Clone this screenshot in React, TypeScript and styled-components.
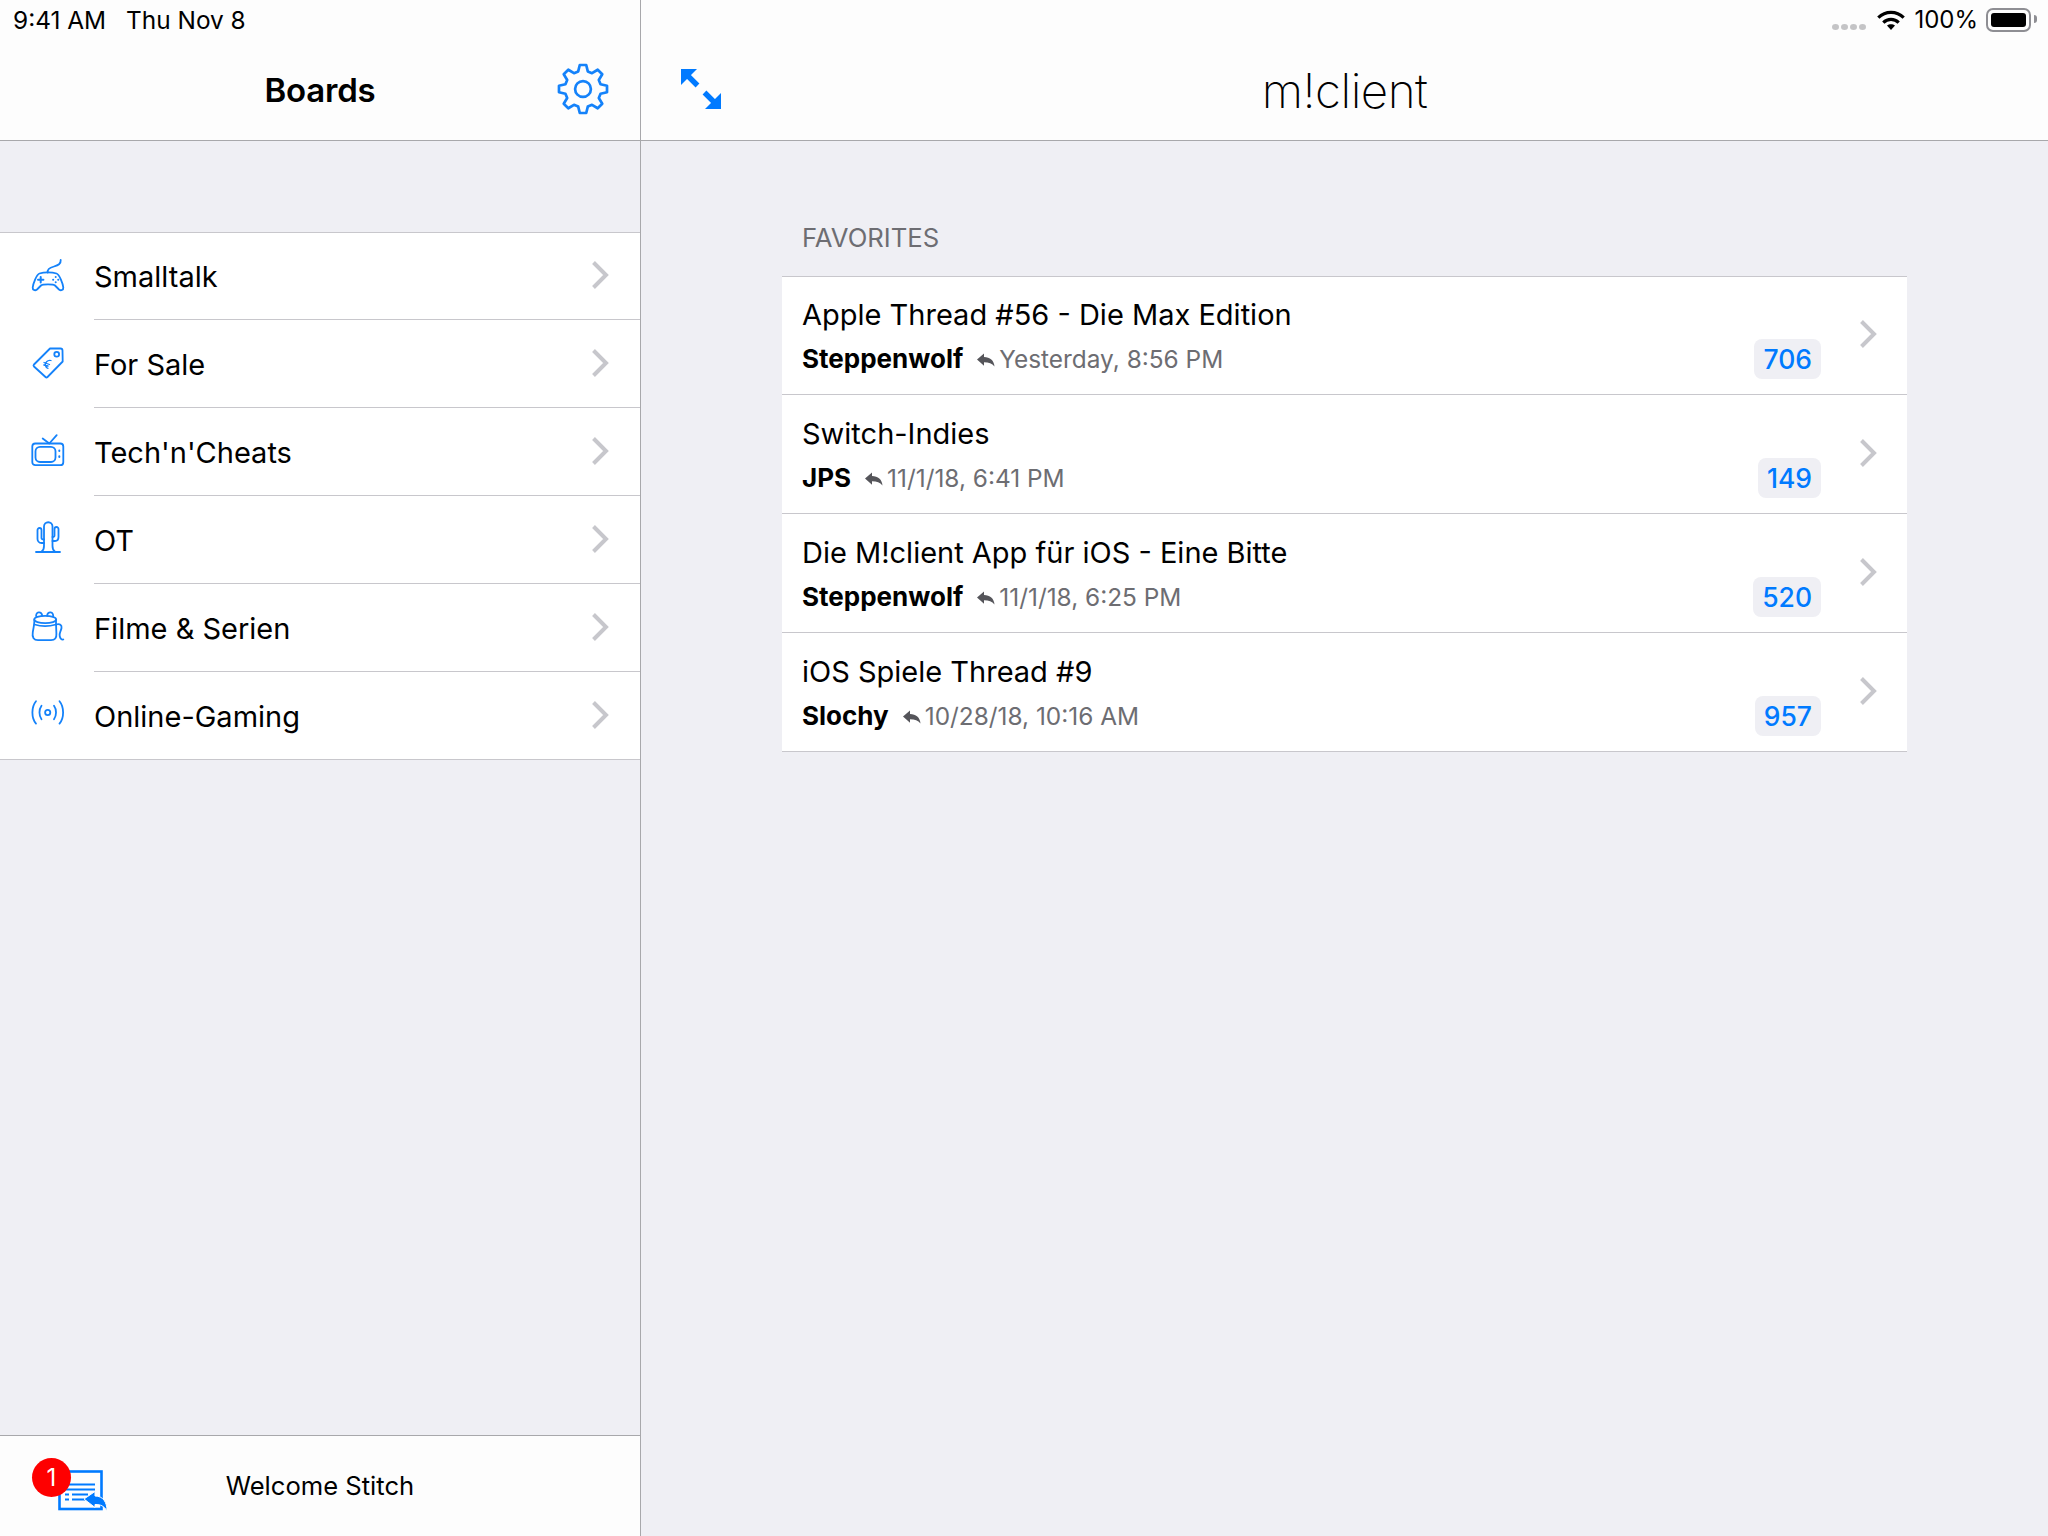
import React from 'react';
import styled, { createGlobalStyle } from 'styled-components';

const BLUE = '#007aff';

const GlobalStyle = createGlobalStyle`
  html, body {
    margin: 0;
    padding: 0;
    background: #efeff4;
  }
  * {
    box-sizing: border-box;
  }
  body {
    font-family: Inter, "Noto Sans", "Liberation Sans", sans-serif;
    color: #000;
  }
`;

const Page = styled.div`
  display: grid;
  grid-template-columns: 641px 1fr;
  width: 2048px;
  height: 1536px;
  overflow: hidden;
`;

const Sidebar = styled.div`
  display: flex;
  flex-direction: column;
  border-right: 1px solid #a8a8ab;
`;

const Main = styled.div`
  display: flex;
  flex-direction: column;
`;

const TopBar = styled.header`
  height: 141px;
  background: #fdfdfd;
  border-bottom: 1px solid #a8a8ab;
  display: flex;
  flex-direction: column;
`;

const StatusBar = styled.div<{ $right?: boolean }>`
  height: 40px;
  display: flex;
  align-items: center;
  justify-content: ${p => (p.$right ? 'flex-end' : 'flex-start')};
  padding: ${p => (p.$right ? '0 17px 0 0' : '0 0 0 13px')};
  font-size: 24.4px;
  line-height: 40px;
  gap: 20px;
`;

const StatusRight = styled.div`
  display: flex;
  align-items: center;
`;

const SignalDots = styled.div`
  display: flex;
  gap: 2px;
  margin: 13px 11px 0 0;
`;

const SignalDot = styled.span`
  width: 7px;
  height: 6px;
  border-radius: 50%;
  background: #c4c4c6;
`;

const BatteryPct = styled.span`
  margin: 0 8px 0 9px;
  font-size: 24px;
`;

const Battery = styled.div`
  width: 45px;
  height: 24px;
  padding: 3px;
  border: 2px solid #8e8e93;
  border-radius: 7px;
  position: relative;

  &::before {
    content: '';
    display: block;
    height: 100%;
    border-radius: 3px;
    background: #000;
  }
  &::after {
    content: '';
    position: absolute;
    right: -8px;
    top: 5px;
    width: 3px;
    height: 8px;
    border-radius: 0 3px 3px 0;
    background: #8e8e93;
  }
`;

const NavRow = styled.div`
  flex: 1;
  position: relative;
  display: flex;
  align-items: center;
  justify-content: center;
`;

const NavTitle = styled.h1`
  margin: 0;
  font-size: 33px;
  font-weight: 600;
  letter-spacing: -0.2px;
`;

const Brand = styled.div`
  margin-top: 2px;
  font-size: 47.5px;
  font-weight: 200;
  letter-spacing: -0.5px;
  line-height: 60px;
`;

const NavIcon = styled.svg<{ $side: 'left' | 'right'; $offset: number; $top: number }>`
  position: absolute;
  ${p => p.$side}: ${p => p.$offset}px;
  top: ${p => p.$top}px;
`;

const BoardSection = styled.div`
  margin-top: 91px;
  background: #fff;
  border-top: 1px solid #c8c7cc;
  border-bottom: 1px solid #c8c7cc;
`;

const BoardRow = styled.div`
  height: 88px;
  display: flex;
  align-items: center;
  padding-left: 30px;

  &:first-child,
  &:last-child {
    height: 87px;
  }
`;

const BoardIcon = styled.svg`
  flex: none;
  width: 36px;
  height: 36px;
  margin: -3px 28px 0 0;
  fill: none;
  stroke: #1482fa;
  stroke-width: 1.8;
  stroke-linecap: round;
  stroke-linejoin: round;
`;

const BoardBody = styled.div<{ $last?: boolean }>`
  flex: 1;
  align-self: stretch;
  display: flex;
  align-items: center;
  justify-content: space-between;
  padding: 1px 31px 0 0;
  font-size: 29px;
  border-bottom: ${p => (p.$last ? 'none' : '1px solid #c8c7cc')};
`;

const Chevron = styled.svg`
  flex: none;
  width: 18px;
  height: 28px;
  margin-top: -3px;
  fill: none;
  stroke: #c7c7cc;
  stroke-width: 4;
`;

const Spacer = styled.div`
  flex: 1;
`;

const BottomBar = styled.footer`
  height: 101px;
  background: #fdfdfd;
  border-top: 1px solid #a8a8ab;
  position: relative;
  display: flex;
  align-items: center;
  justify-content: center;
  font-size: 25.6px;
  padding-bottom: 1px;
`;

const InboxIcon = styled.svg`
  position: absolute;
  left: 58px;
  top: 33px;
`;

const RedBadge = styled.span`
  position: absolute;
  left: 32px;
  top: 22px;
  width: 39px;
  height: 39px;
  border-radius: 50%;
  background: #fe0000;
  color: #fff;
  font-size: 24px;
  display: flex;
  align-items: center;
  justify-content: center;
`;

const Content = styled.div`
  padding: 0 141px;
`;

const SectionLabel = styled.div`
  height: 135px;
  display: flex;
  align-items: flex-end;
  padding: 0 0 23px 20px;
  font-size: 25.7px;
  line-height: 30px;
  color: #6d6d72;
`;

const ThreadList = styled.div`
  background: #fff;
  border-top: 1px solid #c8c7cc;
`;

const ThreadText = styled.div`
  flex: 1;
  padding-top: 19px;
`;

const ThreadRow = styled.div`
  height: 119px;
  display: flex;
  padding-left: 20px;
  border-bottom: 1px solid #c8c7cc;

  &:first-child {
    height: 118px;
  }
  &:first-child ${ThreadText} {
    padding-top: 18px;
  }
`;

const ThreadTitle = styled.div`
  font-size: 29px;
  line-height: 40px;
`;

const ThreadMeta = styled.div`
  margin-top: 3.5px;
  display: flex;
  align-items: center;
  font-size: 24.4px;
  line-height: 40px;
  color: #6d6d72;
`;

const Author = styled.span`
  font-size: 26px;
  font-weight: 700;
  color: #000;
`;

const ReplyGlyph = styled.svg`
  margin: 2px 4px 0 14px;
`;

const CountBadge = styled.span`
  align-self: flex-end;
  margin-bottom: 15px;
  height: 40px;
  padding: 0 9px;
  border-radius: 8px;
  background: #efeff4;
  color: ${BLUE};
  font-size: 26.5px;
  font-weight: 500;
  line-height: 40px;
`;

const ChevronCell = styled.div`
  flex: none;
  width: 86px;
  display: flex;
  align-items: center;
  justify-content: flex-start;
  padding-left: 38px;
`;

const ChevronIcon = () => (
  <Chevron viewBox="0 0 18 28">
    <path d="M2.5 1.5 L15 14 L2.5 26.5" />
  </Chevron>
);

const gearPath = () => {
  const teeth = 8;
  const cx = 25;
  const cy = 25;
  const points: string[] = [];
  for (let i = 0; i < teeth; i++) {
    const a = (i * Math.PI * 2) / teeth - Math.PI / 2;
    const step = (Math.PI * 2) / teeth;
    const list: [number, number][] = [
      [a - step * 0.34, 17.5],
      [a - step * 0.17, 23.3],
      [a + step * 0.17, 23.3],
      [a + step * 0.34, 17.5],
    ];
    list.forEach(([t, r]) => {
      points.push(`${(cx + Math.cos(t) * r).toFixed(2)} ${(cy + Math.sin(t) * r).toFixed(2)}`);
    });
  }
  return `M${points.join(' L')} Z`;
};

const GamepadIcon = () => (
  <BoardIcon viewBox="0 0 36 36">
    <path d="M17.7 15.7 C17 12 20 10.5 24 9.5 C28 8.5 31 7 30.7 3" />
    <path d="M9.5 16.5 C14 15 22 15 26.5 16.5 C29.5 17.5 33 27 33.3 30.5 C33.5 33 31 34 29 32.5 L25 28.5 C23.5 27 12.5 27 11 28.5 L7 32.5 C5 34 2.5 33 2.7 30.5 C3 27 6.5 17.5 9.5 16.5 Z" />
    <path d="M8 22.7 H13.4 M10.7 20 V25.4" strokeWidth="2" />
    <path d="M25.7 20 v.1 M25.7 25.2 v.1 M23.1 22.7 h.1 M28.2 22.7 h.1" strokeWidth="2" />
  </BoardIcon>
);

const TagIcon = () => (
  <BoardIcon viewBox="0 0 36 36">
    <path d="M20 3.5 L30.5 3.5 Q32.5 3.5 32.5 5.5 L32.7 16.5 L17.5 32 Q16.5 33 15.5 32 L4 21.5 Q3 20.5 4 19.5 Z" />
    <circle cx="26.7" cy="9.3" r="2.4" />
    <path d="M21 15.5 C17.5 14.5 14.5 18 15.5 21 C16 22.5 17 23 18 23.3 M14 17.5 L19.5 19.5 M13.8 20 L18 21" strokeWidth="1.3" />
  </BoardIcon>
);

const TvIcon = () => (
  <BoardIcon viewBox="0 0 36 36">
    <rect x="2.3" y="10.5" width="31" height="21.7" rx="3" />
    <rect x="5.5" y="13.8" width="20" height="15.2" rx="4.5" />
    <path d="M12.7 5.5 L19.3 10.5 L26.7 2.2" />
    <path d="M29.3 17.5 v.6 M29.3 23.3 v.6" strokeWidth="2" />
  </BoardIcon>
);

const CactusIcon = () => (
  <BoardIcon viewBox="0 0 36 36">
    <path d="M6 31 H30" />
    <path d="M11.5 30.5 C13.5 29.5 14 27.5 14 25 V5.5 a4.2 4.2 0 0 1 8.5 0 V25 C22.5 27.5 23 29.5 25 30.5" />
    <path d="M14 22 H11.5 C9 22 7.5 20 7.5 18 V9 a2 2 0 0 1 4 0 V17 C11.5 18 12.5 18.5 14 18.5" />
    <path d="M22.5 20 H25 C27 20 28.5 18.5 28.5 16 V8 a2 2 0 0 0 -4 0 V14.5 C24.5 15.5 23.5 16 22.5 16" />
  </BoardIcon>
);

const BucketIcon = () => (
  <BoardIcon viewBox="0 0 36 36">
    <ellipse cx="15.2" cy="10.5" rx="11" ry="3.6" />
    <path d="M6.3 7.5 a3 3 0 1 1 5.8 -.8 M17.2 6.7 a3 3 0 1 1 5.8 .8" />
    <path d="M4.4 11 C4.4 13 3.8 18 2.8 23 C1.8 28.5 4 31.2 8 31.2 H21 C25 31.2 26.7 29 26.4 24.5 C26.2 20 26 14 26 11" />
    <path d="M4.6 15.5 C11 17.5 19 17.5 26 15.5" />
    <path d="M26 15.5 C30 14.5 32 16 31.5 19 C31 22 29 24 29.7 27 C30.2 29.5 31.5 31 33.3 30.5" />
  </BoardIcon>
);

const AntennaIcon = () => (
  <BoardIcon viewBox="0 0 36 36">
    <circle cx="17.7" cy="16.5" r="2.6" />
    <path d="M11.5 9.8 C8.8 13.5 8.8 19.5 11.5 23.2 M24 9.8 C26.7 13.5 26.7 19.5 24 23.2" />
    <path d="M6 5.2 C1.2 11 1.2 22 6 27.6 M29.5 5.2 C34.3 11 34.3 22 29.5 27.6" />
  </BoardIcon>
);

const boards = [
  { name: 'Smalltalk', icon: <GamepadIcon /> },
  { name: 'For Sale', icon: <TagIcon /> },
  { name: "Tech'n'Cheats", icon: <TvIcon /> },
  { name: 'OT', icon: <CactusIcon /> },
  { name: 'Filme & Serien', icon: <BucketIcon /> },
  { name: 'Online-Gaming', icon: <AntennaIcon /> },
];

const threads = [
  { title: 'Apple Thread #56 - Die Max Edition', author: 'Steppenwolf', date: 'Yesterday, 8:56 PM', count: 706 },
  { title: 'Switch-Indies', author: 'JPS', date: '11/1/18, 6:41 PM', count: 149 },
  { title: 'Die M!client App für iOS - Eine Bitte', author: 'Steppenwolf', date: '11/1/18, 6:25 PM', count: 520 },
  { title: 'iOS Spiele Thread #9', author: 'Slochy', date: '10/28/18, 10:16 AM', count: 957 },
];

export default function App() {
  return (
    <Page>
      <GlobalStyle />
      <Sidebar>
        <TopBar>
          <StatusBar>
            <span>9:41 AM</span>
            <span>Thu Nov 8</span>
          </StatusBar>
          <NavRow>
            <NavTitle>Boards</NavTitle>
            <NavIcon $side="right" $offset={31} $top={23} width="52" height="52" viewBox="0 0 50 50">
              <path d={gearPath()} fill="none" stroke="#1482fa" strokeWidth="2.6" strokeLinejoin="round" />
              <circle cx="25" cy="25" r="7.6" fill="none" stroke="#1482fa" strokeWidth="2.6" />
            </NavIcon>
          </NavRow>
        </TopBar>
        <BoardSection>
          {boards.map((b, i) => (
            <BoardRow key={b.name}>
              {b.icon}
              <BoardBody $last={i === boards.length - 1}>
                {b.name}
                <ChevronIcon />
              </BoardBody>
            </BoardRow>
          ))}
        </BoardSection>
        <Spacer />
        <BottomBar>
          <InboxIcon width="50" height="44" viewBox="0 0 50 44">
            <rect x="1.5" y="2.5" width="42" height="37.5" fill="none" stroke={BLUE} strokeWidth="2.6" />
            <path d="M7 15.5 H37 M7 20.5 H37 M7 25.5 H11 M14 25.5 H30 M7 30.5 H11 M14 30.5 H27" stroke={BLUE} strokeWidth="2" />
            <path d="M26 30 L37 22.5 V27 C45 27 49 33 49 42 C46 37 43 35.5 37 35.5 V38.5 Z" fill={BLUE} stroke="#fdfdfd" strokeWidth="1" />
          </InboxIcon>
          <RedBadge>1</RedBadge>
          Welcome Stitch
        </BottomBar>
      </Sidebar>
      <Main>
        <TopBar>
          <StatusBar $right>
            <StatusRight>
              <SignalDots>
                <SignalDot />
                <SignalDot />
                <SignalDot />
                <SignalDot />
              </SignalDots>
              <svg width="28" height="22" viewBox="0 0 28 22">
                <path d="M14 21 L10 16.6 C12.2 14.7 15.8 14.7 18 16.6 Z" fill="#000" />
                <path d="M6.3 13.6 C10.6 9.4 17.4 9.4 21.7 13.6" fill="none" stroke="#000" strokeWidth="3.2" />
                <path d="M1.3 8.6 C8.5 1.6 19.5 1.6 26.7 8.6" fill="none" stroke="#000" strokeWidth="3.2" />
              </svg>
              <BatteryPct>100%</BatteryPct>
              <Battery />
            </StatusRight>
          </StatusBar>
          <NavRow>
            <NavIcon $side="left" $offset={39} $top={27} width="44" height="44" viewBox="0 0 44 44">
              <path d="M1 2 H17 L1 18 Z M41 42 H25 L41 26 Z" fill={BLUE} />
              <path d="M7 8 L17.5 18.5 M35 36 L24.5 25.5" stroke={BLUE} strokeWidth="5.4" />
            </NavIcon>
            <Brand>m!client</Brand>
          </NavRow>
        </TopBar>
        <Content>
          <SectionLabel>FAVORITES</SectionLabel>
          <ThreadList>
            {threads.map(t => (
              <ThreadRow key={t.title}>
                <ThreadText>
                  <ThreadTitle>{t.title}</ThreadTitle>
                  <ThreadMeta>
                    <Author>{t.author}</Author>
                    <ReplyGlyph width="18" height="14" viewBox="0 0 18 14">
                      <path d="M0 6.5 L7 0.5 V4 C13 4 17 7.5 17.5 13.5 C15 10.5 12 9.3 7 9.3 V12.7 Z" fill="#55555a" />
                    </ReplyGlyph>
                    {t.date}
                  </ThreadMeta>
                </ThreadText>
                <CountBadge>{t.count}</CountBadge>
                <ChevronCell>
                  <ChevronIcon />
                </ChevronCell>
              </ThreadRow>
            ))}
          </ThreadList>
        </Content>
      </Main>
    </Page>
  );
}
